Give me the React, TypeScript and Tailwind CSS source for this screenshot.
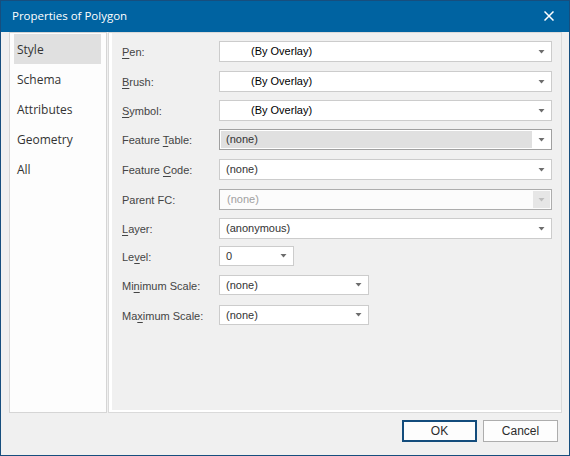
import type { ReactNode } from "react";

type Row = {
  label: ReactNode;
  value: string;
  width: string;
  rowH: string;
  fieldH: string;
  kind?: "overlay" | "focused" | "disabled";
};

const Key = ({ children }: { children: string }) => <span className="underline underline-offset-2">{children}</span>;

const rows: Row[] = [
  { label: <><Key>P</Key>en:</>, value: "(By Overlay)", width: "w-[333px]", rowH: "h-[30px]", fieldH: "h-[21px]", kind: "overlay" },
  { label: <><Key>B</Key>rush:</>, value: "(By Overlay)", width: "w-[333px]", rowH: "h-[29px]", fieldH: "h-[21px]", kind: "overlay" },
  { label: <><Key>S</Key>ymbol:</>, value: "(By Overlay)", width: "w-[333px]", rowH: "h-[29px]", fieldH: "h-[21px]", kind: "overlay" },
  { label: <>Feature <Key>T</Key>able:</>, value: "(none)", width: "w-[333px]", rowH: "h-[30px]", fieldH: "h-[21px]", kind: "focused" },
  { label: <>Feature <Key>C</Key>ode:</>, value: "(none)", width: "w-[333px]", rowH: "h-[30px]", fieldH: "h-[21px]" },
  { label: <>Parent FC:</>, value: "(none)", width: "w-[333px]", rowH: "h-[29px]", fieldH: "h-[21px]", kind: "disabled" },
  { label: <><Key>L</Key>ayer:</>, value: "(anonymous)", width: "w-[333px]", rowH: "h-[28px]", fieldH: "h-[21px]" },
  { label: <>Le<Key>v</Key>el:</>, value: "0", width: "w-[75px]", rowH: "h-[29px]", fieldH: "h-[20px]" },
  { label: <>Mi<Key>n</Key>imum Scale:</>, value: "(none)", width: "w-[150px]", rowH: "h-[30px]", fieldH: "h-[20px]" },
  { label: <>Ma<Key>x</Key>imum Scale:</>, value: "(none)", width: "w-[150px]", rowH: "h-[30px]", fieldH: "h-[20px]" },
];

const tabs = ["Style", "Schema", "Attributes", "Geometry", "All"];

const Arrow = ({ color = "#6d6d6d" }: { color?: string }) => (
  <svg width="7" height="4" viewBox="0 0 7 4">
    <polygon points="0.5,0 6.5,0 3.5,3.5" fill={color} />
  </svg>
);

const Combo = ({ row }: { row: Row }) => {
  if (row.kind === "focused") {
    return (
      <div className={`${row.width} ${row.fieldH} flex border border-[#a0a0a0] bg-white p-px`}>
        <div className="flex-1 flex items-center bg-[#e0e0e0] pl-[5px] text-[#333]">{row.value}</div>
        <div className="w-[18px] flex items-center justify-center">
          <Arrow />
        </div>
      </div>
    );
  }
  if (row.kind === "disabled") {
    return (
      <div className={`${row.width} ${row.fieldH} flex border border-[#adadad] bg-[#fcfcfc] p-px`}>
        <div className="flex-1 flex items-center pl-[6px] text-[#a0a0a0]">{row.value}</div>
        <div className="w-[17px] flex items-center justify-center bg-[#e6e6e6]">
          <Arrow color="#bdbdbd" />
        </div>
      </div>
    );
  }
  return (
    <div className={`${row.width} ${row.fieldH} flex items-center border border-[#cccccc] bg-white`}>
      <div className={`flex-1 ${row.kind === "overlay" ? "pl-[31px] text-black" : "pl-[6px] text-[#333]"}`}>{row.value}</div>
      <div className="w-[20px] flex items-center justify-center">
        <Arrow />
      </div>
    </div>
  );
};

export default function App() {
  return (
    <div className="w-[570px] h-[456px] flex flex-col bg-[#f0f0f0] border border-[#174e7e] font-['Liberation_Sans',Arial,sans-serif] text-[11px]">
      <div className="h-[31px] shrink-0 flex items-center justify-between bg-[#0063a1] pl-[11px] pr-[15px] text-white">
        <span className="font-['Open_Sans',sans-serif] text-[11.5px] pb-px">Properties of Polygon</span>
        <svg width="10" height="10" viewBox="0 0 10 10" className="mb-[1px]">
          <path d="M0.5 0.5 L9.5 9.5 M9.5 0.5 L0.5 9.5" stroke="white" strokeWidth="1.5" />
        </svg>
      </div>

      <div className="flex pl-[8px] gap-px h-[381px]">
        <div className="w-[98px] border border-[#d5d5d5] bg-[#fdfdfd] pl-[4px] pr-[5px] pt-px font-['Open_Sans',sans-serif] text-[12px] text-[#333]">
          {tabs.map((t, i) => (
            <div key={t} className={`h-[30px] flex items-center pl-[3px] pt-[2px] ${i === 0 ? "bg-[#e0e0e0]" : ""}`}>
              {t}
            </div>
          ))}
        </div>

        <div className="w-[454px] border border-[#dadada] shadow-[inset_3px_-2px_0_#ffffff] pt-[8px] pl-[13px]">
          {rows.map((r, i) => (
            <div key={i} className={`${r.rowH} flex items-start`}>
              <div className={`w-[97px] ${r.fieldH} flex items-center pt-[2px] text-[#444]`}>
                <span>{r.label}</span>
              </div>
              <Combo row={r} />
            </div>
          ))}
        </div>
      </div>

      <div className="flex justify-end gap-[6px] pt-[7px] pr-[11px] text-[#2b2b2b] text-[12px]">
        <button className="w-[75px] h-[22px] border-2 border-[#134c7c] bg-[#fdfdfd]">OK</button>
        <button className="w-[75px] h-[22px] border border-[#adadad] bg-[#fdfdfd]">Cancel</button>
      </div>
    </div>
  );
}
